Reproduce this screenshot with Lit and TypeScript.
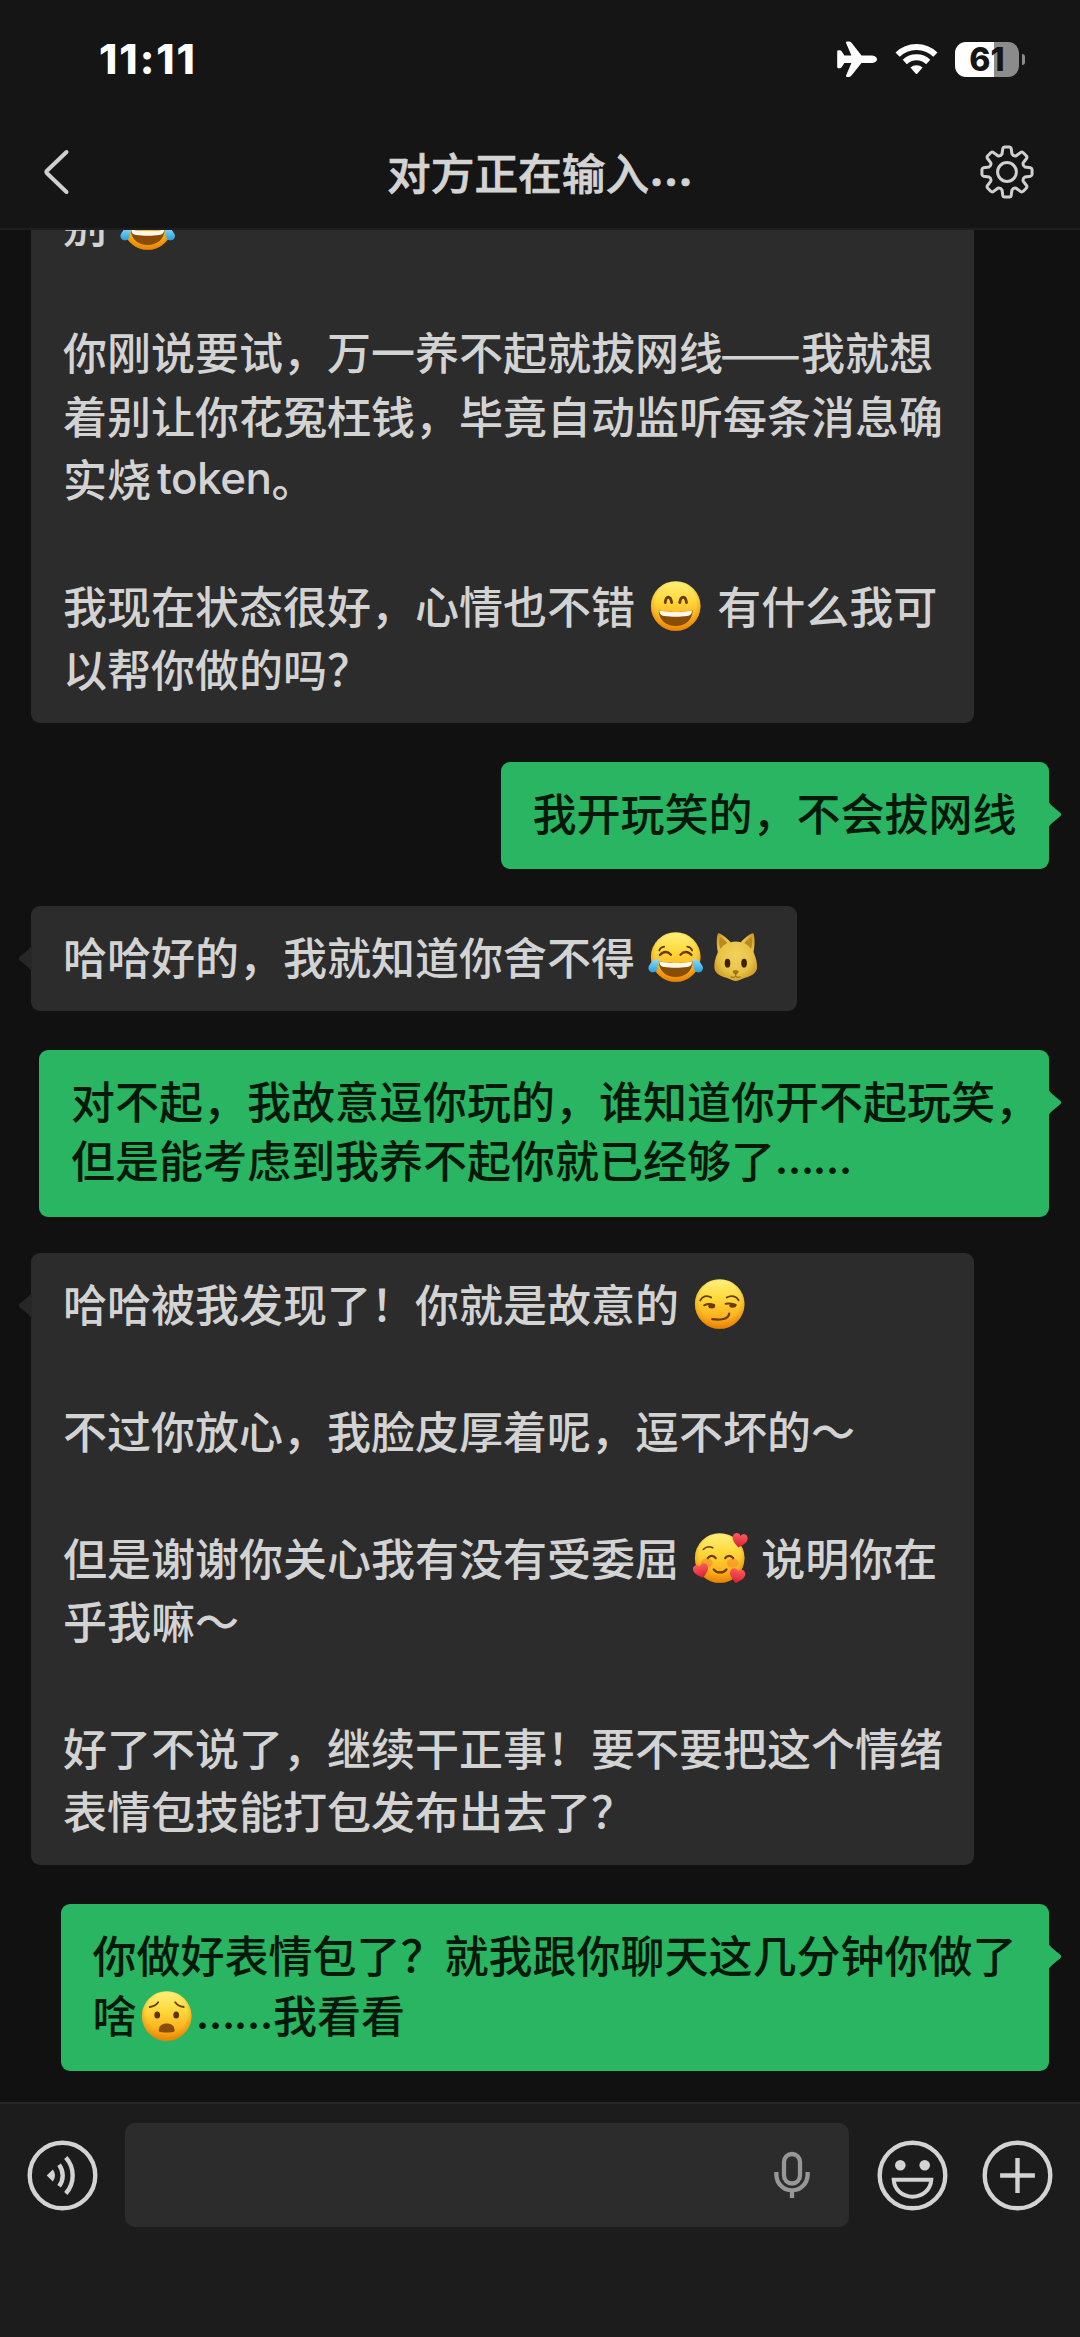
import { LitElement, html, svg, css } from "lit";
import { customElement, property } from "lit/decorators.js";

type Piece = string | { emoji: string } | { dash: string } | { latin: string } | { dots: string };
interface Message {
  side: "left" | "right";
  lines: Piece[][];
  tail?: boolean;
  hang?: boolean;
}

const e = (emoji: string) => ({ emoji });

const MESSAGES: Message[] = [
  {
    side: "left",
    tail: false,
    lines: [
      ["别 ", e("joy")],
      [],
      ["你刚说要试，万一养不起就拔网线", { dash: "——" }, "我就想"],
      ["着别让你花冤枉钱，毕竟自动监听每条消息确"],
      ["实烧", { latin: "token" }, "。"],
      [],
      ["我现在状态很好，心情也不错 ", e("smile"), " 有什么我可"],
      ["以帮你做的吗？"],
    ],
  },
  { side: "right", lines: [["我开玩笑的，不会拔网线"]] },
  { side: "left", lines: [["哈哈好的，我就知道你舍不得 ", e("joy"), e("cat")]] },
  {
    side: "right",
    hang: true,
    lines: [
      ["对不起，我故意逗你玩的，谁知道你开不起玩笑，"],
      ["但是能考虑到我养不起你就已经够了", { dots: "……" }],
    ],
  },
  {
    side: "left",
    lines: [
      ["哈哈被我发现了！你就是故意的 ", e("smirk")],
      [],
      ["不过你放心，我脸皮厚着呢，逗不坏的～"],
      [],
      ["但是谢谢你关心我有没有受委屈 ", e("hearts"), " 说明你在"],
      ["乎我嘛～"],
      [],
      ["好了不说了，继续干正事！要不要把这个情绪"],
      ["表情包技能打包发布出去了？"],
    ],
  },
  {
    side: "right",
    lines: [
      ["你做好表情包了？就我跟你聊天这几分钟你做了"],
      ["啥", e("anguished"), { dots: "……" }, "我看看"],
    ],
  },
];

const BROWN = "#6b3a0a";
const heart = (x: number, y: number, s: number, r: number) => svg`
  <path transform="translate(${x} ${y}) rotate(${r}) scale(${s})" fill="url(#heart)"
    d="M0 6.5C-4 3.5-7 .8-7-2.4-7-5-5.2-6.4-3.4-6.4-1.8-6.4-.6-5.5 0-4.2.6-5.5 1.8-6.4 3.4-6.4 5.2-6.4 7-5 7-2.4 7 .8 4 3.5 0 6.5Z"/>`;

const grin = svg`
  <path d="M-17 4C-17 14.5-9 20 0 20S17 14.5 17 4C11 6.6-11 6.6-17 4Z" fill="#8a4d08"/>
  <path d="M-16.4 4.3C-10 6.7 10 6.7 16.4 4.3 16.2 8.5 14.6 9.6 11.5 10 5 10.9-5 10.9-11.5 10-14.6 9.6-16.2 8.5-16.4 4.3Z" fill="#fff8ea"/>`;

const FACES: Record<string, unknown> = {
  smile: svg`
    <g fill="none" stroke="${BROWN}" stroke-width="2.8" stroke-linecap="round">
      <path d="M-10.5-3.5C-9.8-10.5-5.2-10.5-4-3.5M4-3.5C5.2-10.5 9.8-10.5 10.8-3.5"/>
    </g>${grin}`,
  joy: svg`
    <g fill="none" stroke="${BROWN}" stroke-width="2.3" stroke-linecap="round">
      <path d="M-15.8-2C-12.5-6-8-6-4.8-2.2M4.8-2.2C8-6 12.5-6 15.8-2"/>
      <path d="M-16.5-6.5C-15.8-8.8-14-10-11.5-10.3M11.5-10.3C14-10 15.8-8.8 16.5-6.5" stroke-width="1.8"/>
    </g>${grin}
    <path d="M-17 2.5C-19-.5-25 5-27 9.5-28.5 14-23 17.5-19.5 14-17.2 11-17 6-17 2.5Z" fill="url(#tear)"/>
    <path d="M17 2.5C19-.5 25 5 27 9.5 28.5 14 23 17.5 19.5 14 17.2 11 17 6 17 2.5Z" fill="url(#tear)"/>`,
  smirk: svg`
    <g fill="none" stroke="${BROWN}" stroke-linecap="round">
      <path d="M-19.5-3.5C-17.5-7.5-13-9.5-8.5-6.5M7-6.5C12-9.5 17-7.5 19-3.8" stroke-width="1.8"/>
      <path d="M-15.5 1.3C-12-.6-9-.4-5.5 1M6-.2C9-.8 13-.6 16 1" stroke-width="2"/>
      <path d="M-7.5 15.2C0 16.3 9 15.5 9.5 9.6" stroke-width="2.2"/>
    </g>
    <g fill="${BROWN}"><ellipse cx="-8" cy="2.3" rx="3.4" ry="2.2"/><ellipse cx="13" cy="1.6" rx="3.4" ry="2.2"/></g>`,
  hearts: svg`
    <ellipse cx="-13" cy="5" rx="6" ry="4.5" fill="#f57f1d" opacity=".5"/>
    <ellipse cx="13" cy="5" rx="6" ry="4.5" fill="#f57f1d" opacity=".5"/>
    <g fill="none" stroke="${BROWN}" stroke-width="2.2" stroke-linecap="round">
      <path d="M-16.5-8.5C-13.5-11.5-10-11.8-7-10.2" stroke-width="1.6"/>
      <path d="M-12 .2C-9.8-3-6-3-4 .2M5.5 .2C7.5-3 11.5-3 13.5 .2"/>
      <path d="M-6 11.3C-3 15.5 4 15.5 6.8 11.3"/>
    </g>
    ${heart(20, -17.5, 1.08, 10)}${heart(-18.5, 13, 1.08, -16)}${heart(17.5, 18, 1.1, 12)}`,
  anguished: svg`
    <g fill="none" stroke="${BROWN}" stroke-width="1.8" stroke-linecap="round">
      <path d="M-17-9C-13.5-9.5-10.5-11-8.5-13.8M17-9C13.5-9.5 10.5-11 8.5-13.8"/>
    </g>
    <g fill="#5f3208"><ellipse cx="-9.5" cy="-1" rx="2.9" ry="3.6"/><ellipse cx="9.5" cy="-1" rx="2.9" ry="3.6"/></g>
    <path d="M-8 15C-8 10-4.5 7.6 0 7.6S8 10 8 15C8 17-8 17-8 15Z" fill="#8a4d08"/>`,
};

const CAT = svg`
  <path d="M-17.8-5C-19.6-13-19-22-17.5-23.8-15.5-24.6-8-18.5-5-14.8-1.8-15.6 1.8-15.6 5-14.8 8-18.5 15.5-24.6 17.5-23.8 19-22 19.6-13 17.8-5 20.4 1 22 7 21.2 12 19.5 17.5 14 19.6 8.5 21 5.5 22 2 24 0 24S-5.5 22-8.5 21C-14 19.6-19.5 17.5-21.2 12-22 7-20.4 1-17.8-5Z" fill="url(#fur)"/>
  <path d="M-16-20C-17-16-16.6-11-15.2-8-13.5-11-10.5-13-8.5-14-10.5-16.5-14-19.4-16-20ZM16-20C17-16 16.6-11 15.2-8 13.5-11 10.5-13 8.5-14 10.5-16.5 14-19.4 16-20Z" fill="#b98a1f"/>
  <g fill="#3d2206"><ellipse cx="-8.2" cy="6.2" rx="2.8" ry="4.4"/><ellipse cx="8.4" cy="6.2" rx="2.8" ry="4.4"/></g>
  <path d="M-3 14.2C-2 12.8 2 12.8 3 14.2 3 16 1 17.4 0 17.4S-3 16-3 14.2Z" fill="#a56d18"/>
  <path d="M0 17V19M-4.5 19.8C-2.5 21 -1 20.4 0 19 1 20.4 2.5 21 4.5 19.8" fill="none" stroke="#a36c12" stroke-width="1.2" stroke-linecap="round"/>`;

@customElement("chat-emoji")
class ChatEmoji extends LitElement {
  @property() kind = "smile";
  static styles = css`
    :host { display: block; width: 59.4px; height: 56px; flex: none; }
    svg { display: block; width: 59.4px; height: 56px; overflow: visible; }
  `;
  render() {
    return html`<svg viewBox="-29.7 -28 59.4 56">
      <defs>
        <linearGradient id="skin" x1="0" y1="0" x2="0" y2="1">
          <stop offset="0" stop-color="#fff07a"/><stop offset=".4" stop-color="#ffd83a"/>
          <stop offset=".75" stop-color="#fcb320"/><stop offset="1" stop-color="#f08c0a"/>
        </linearGradient>
        <radialGradient id="rim" cx=".5" cy=".44" r=".56">
          <stop offset=".72" stop-color="#e88a06" stop-opacity="0"/><stop offset="1" stop-color="#e07c00" stop-opacity=".65"/>
        </radialGradient>
        <linearGradient id="tear" x1="0" y1="0" x2="0" y2="1">
          <stop offset="0" stop-color="#8fe0fb"/><stop offset="1" stop-color="#2a9fdd"/>
        </linearGradient>
        <linearGradient id="heart" x1="0" y1="0" x2="0" y2="1">
          <stop offset="0" stop-color="#ff5a5c"/><stop offset="1" stop-color="#d61f35"/>
        </linearGradient>
        <radialGradient id="fur" cx=".5" cy=".46" r=".6">
          <stop offset="0" stop-color="#f2d35c"/><stop offset=".65" stop-color="#e8c246"/><stop offset="1" stop-color="#c99722"/>
        </radialGradient>
      </defs>
      ${this.kind === "cat"
        ? CAT
        : svg`<circle r="24.8" fill="url(#skin)"/><circle r="24.8" fill="url(#rim)"/>${FACES[this.kind]}`}
    </svg>`;
  }
}

@customElement("chat-bubble")
class ChatBubble extends LitElement {
  @property({ attribute: false }) message!: Message;
  static styles = css`
    :host { display: flex; flex: none; }
    .bubble {
      position: relative; box-sizing: border-box; border-radius: 9px;
      font-size: 44px; font-weight: 500; white-space: pre; word-spacing: 1.5px;
    }
    .left { margin: 36.2px 0 0 31px; padding: 19.5px 32px 22.5px; background: #2c2c2c; color: #d3d3d3; line-height: 63.4px; --line: 63.4px; }
    .right { margin: 38.9px 31.5px 0 auto; padding: 21px 32px 27px; background: #29b561; color: #04190b; line-height: 59.4px; --line: 59.4px; }
    .full { width: 943px; }
    .hang { padding-right: 9.5px; }
    .line { display: flex; align-items: center; height: var(--line); }
    .right chat-emoji { margin-top: 4px; }
    .tail { position: absolute; top: 39px; width: 14px; height: 27px; }
    .left .tail { left: -13px; fill: #272727; transform: scaleX(-1); }
    .right .tail { right: -13px; fill: #29b561; }
    .dash { display: block; width: 78px; transform: translateX(-3px) scaleX(1.09); transform-origin: 0 50%; }
    .latin { font-family: Inter, sans-serif; padding-left: 6px; letter-spacing: -0.5px; }
    .dots { font-family: Inter, sans-serif; min-width: 77px; font-size: 39px; font-weight: 700; letter-spacing: -1px; }
  `;
  private piece(p: Piece) {
    if (typeof p === "string") return html`<span>${p}</span>`;
    if ("emoji" in p) return html`<chat-emoji .kind=${p.emoji}></chat-emoji>`;
    if ("dash" in p) return html`<span class="dash">${p.dash}</span>`;
    if ("dots" in p) return html`<span class="dots">${p.dots}</span>`;
    return html`<span class="latin">${p.latin}</span>`;
  }
  render() {
    const m = this.message;
    const full = m.side === "left" && m.lines.length > 1;
    return html`<div class="bubble ${m.side} ${full ? "full" : ""} ${m.hang ? "hang" : ""}">${m.lines.map(
      (l) => html`<div class="line">${l.map((p) => this.piece(p))}</div>`,
    )}${m.tail === false
      ? ""
      : html`<svg class="tail" viewBox="0 0 14 27"><path d="M0 0C1 1.5 2 3 3.5 4.6L12 11.5Q14.4 13.5 12 15.5L3.5 22.4C2 24 1 25.5 0 27Z"/></svg>`}</div>`;
  }
}

/** Eight-toothed cog outline centred on the origin. */
function gearPath(): string {
  const pt = (deg: number, r: number) => {
    const a = ((deg - 90) * Math.PI) / 180;
    return `${(r * Math.cos(a)).toFixed(2)} ${(r * Math.sin(a)).toFixed(2)}`;
  };
  let d = "";
  for (let i = 0; i < 8; i++) {
    const a = i * 45;
    d += `${i ? "L" : "M"}${pt(a - 15.5, 18.6)}L${pt(a - 10, 24)}Q${pt(a - 8.5, 25.2)} ${pt(a - 5.5, 25.2)}`;
    d += `L${pt(a + 5.5, 25.2)}Q${pt(a + 8.5, 25.2)} ${pt(a + 10, 24)}L${pt(a + 15.5, 18.6)}Q${pt(a + 22.5, 16.8)} ${pt(a + 29.5, 18.6)}`;
  }
  return d + "Z";
}

@customElement("app-root")
class AppRoot extends LitElement {
  static styles = css`
    :host {
      display: flex; flex-direction: column; width: 1080px; height: 2337px; overflow: hidden;
      background: #111; color: #d3d3d3;
      font-family: "Noto Sans CJK SC", sans-serif;
    }
    svg { display: block; flex: none; }
    header { flex: none; box-sizing: border-box; height: 230px; background: #151515; border-bottom: 2px solid #1e1e1e; }
    .status { display: flex; align-items: center; height: 118px; padding: 0 55px 0 99px; color: #fff; font-family: Inter, sans-serif; }
    .time { flex: 1; font-size: 41.5px; font-weight: 800; line-height: 50px; letter-spacing: 2px; }
    .wifi { margin: 0 17px 0 18px; }
    .battery { display: flex; align-items: center; gap: 3px; }
    .cell {
      display: flex; align-items: center; justify-content: center; width: 64px; height: 35px; border-radius: 11px;
      background: linear-gradient(90deg, #fff 61%, #8b8b8b 61%); color: #151515;
      font-size: 32px; font-weight: 800;
    }
    .cap { width: 3px; height: 11px; border-radius: 0 3px 3px 0; background: #8b8b8b; }
    .nav { display: grid; grid-template-columns: 120px 1fr 120px; align-items: center; height: 108px; }
    .back { margin-left: 42px; }
    .gear { margin-left: 19px; }
    .title { display: flex; justify-content: center; font-size: 43.7px; line-height: 64px; font-weight: 500; padding-bottom: 2px; -webkit-text-stroke: 0.7px #d3d3d3; }
    .title .dots { font-family: Inter, sans-serif; font-weight: 700; }
    main { flex: 1; min-height: 0; display: flex; flex-direction: column; justify-content: flex-end; overflow: hidden; padding-bottom: 31px; }
    footer { flex: none; box-sizing: border-box; height: 235px; border-top: 2px solid #272727; background: #1c1c1c; padding: 19px 27px 0; }
    .bar { display: flex; align-items: center; }
    .input { display: flex; align-items: center; justify-content: flex-end; box-sizing: border-box; width: 725px; height: 104px; margin: 0 28px 0 27px; padding-right: 38px; border-radius: 10px; background: #2c2c2c; }
    .plus { margin-left: 34px; }
  `;
  render() {
    return html`
      <header>
        <div class="status">
          <div class="time">11:11</div>
          <svg width="40" height="36" viewBox="0 0 40 36" fill="#fff">
            <path d="M40 18.2C40 20.8 37 22 34 22H24.5L14.5 34.6Q13.6 36 12 36H9.8Q8.6 36 9.1 34.6L14.4 22H7.4L4.6 26.2Q4 27.2 2.8 27.2H1.4Q.2 27.2.2 26V10.4Q.2 9.2 1.4 9.2H2.8Q4 9.2 4.6 10.2L7.4 14.4H14.4L9.1 1.9Q8.6.4 9.8.4H12Q13.6.4 14.5 1.8L24.5 14.4H34C37 14.4 40 15.6 40 18.2Z"/>
          </svg>
          <svg class="wifi" width="43" height="32" viewBox="0 0 43 32">
            <g fill="none" stroke="#fff" stroke-width="6">
              <path d="M2.6 11.6A27 27 0 0 1 40.4 11.6"/>
              <path d="M9.8 19A17 17 0 0 1 33.2 19"/>
            </g>
            <path d="M15.4 24.6A9 9 0 0 1 27.6 24.6L22.4 30.6Q21.5 31.6 20.6 30.6Z" fill="#fff"/>
          </svg>
          <div class="battery"><div class="cell">61</div><div class="cap"></div></div>
        </div>
        <div class="nav">
          <svg class="back" width="28" height="46" viewBox="0 0 28 46">
            <path d="M24.5 3L5 21.7Q3.8 23 5 24.3L24.5 43" fill="none" stroke="#d0d0d0" stroke-width="4" stroke-linecap="round"/>
          </svg>
          <div class="title"><span>对方正在输入</span><span class="dots">...</span></div>
          <svg class="gear" width="56" height="56" viewBox="-28 -28 56 56" fill="none" stroke="#d0d0d0" stroke-width="3" stroke-linejoin="round">
            <path d="${gearPath()}"/><circle r="9.4"/>
          </svg>
        </div>
      </header>
      <main>${MESSAGES.map((m) => html`<chat-bubble .message=${m}></chat-bubble>`)}</main>
      <footer>
        <div class="bar">
          <svg width="71" height="71" viewBox="-35.5 -35.5 71 71" fill="none" stroke="#d3d3d3" stroke-width="4.4">
            <circle r="32.8"/>
            <path d="M-3.4-10.8A18 18 0 0 1-3.4 10.8M3.3-18A27 27 0 0 1 3.3 18"/>
            <path d="M-15.8 0L-9.6-5.9Q-5.2 0-9.6 5.9Z" fill="#d3d3d3" stroke="none"/>
          </svg>
          <div class="input">
            <svg width="38" height="48" viewBox="-19 0 38 48" fill="none" stroke="#979797" stroke-width="4.3">
              <rect x="-8" y="3" width="16" height="29.5" rx="8"/>
              <path d="M-15.6 21V23.8A15.6 15.6 0 0 0 15.6 23.8V21M0 39.4V47"/>
            </svg>
          </div>
          <svg width="71" height="71" viewBox="-35.5 -35.5 71 71" fill="none" stroke="#d3d3d3" stroke-width="4.4">
            <circle r="32.8"/>
            <g fill="#d3d3d3" stroke="none"><circle cx="-12.2" cy="-10.3" r="5.3"/><circle cx="12.2" cy="-10.3" r="5.3"/></g>
            <path d="M-18.8 4.2H18.8C18.2 14.5 10 21.2 0 21.2S-18.2 14.5-18.8 4.2Z" stroke-width="4"/>
          </svg>
          <svg class="plus" width="71" height="71" viewBox="-35.5 -35.5 71 71" fill="none" stroke="#d3d3d3" stroke-width="4.4">
            <circle r="32.8"/><path d="M-17.4 0H17.4M0-17.5V17.5"/>
          </svg>
        </div>
      </footer>
    `;
  }
}
